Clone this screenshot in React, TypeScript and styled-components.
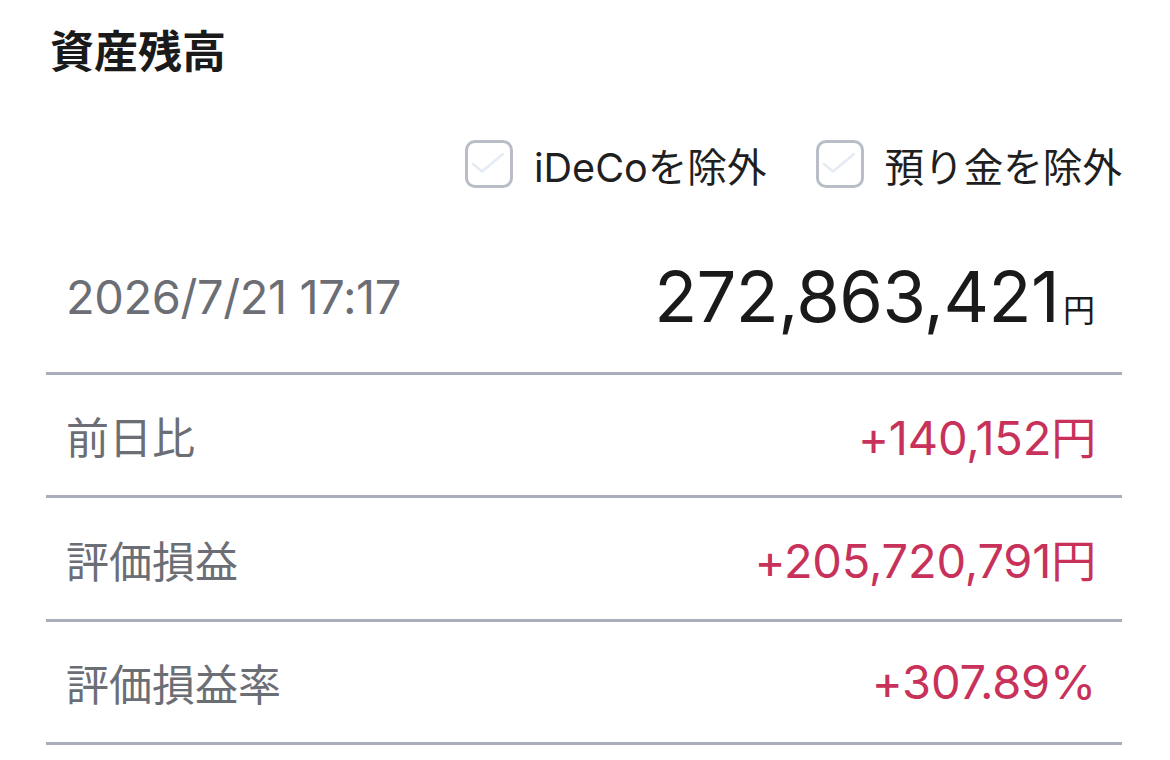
import React from 'react';
import styled, { createGlobalStyle } from 'styled-components';

const GlobalStyle = createGlobalStyle`
  html, body {
    margin: 0;
    padding: 0;
    background: #ffffff;
  }
  body {
    font-family: "Inter", "Noto Sans CJK JP", sans-serif;
    color: #1c1c1e;
  }
`;

const Page = styled.div`
  width: 1170px;
  height: 760px;
  box-sizing: border-box;
  padding: 19px 48px 0 46px;
  display: flex;
  flex-direction: column;
  overflow: hidden;
`;

const Title = styled.h1`
  margin: 0 0 0 4px;
  font-family: "Noto Sans CJK JP", sans-serif;
  font-size: 44px;
  font-weight: 700;
  line-height: 60px;
  color: #1a1a1a;
`;

const FilterBar = styled.div`
  margin-top: 55px;
  height: 60px;
  display: flex;
  justify-content: flex-end;
  align-items: center;
  gap: 49px;
`;

const Filter = styled.label`
  display: flex;
  align-items: center;
  gap: 21px;
  font-family: "Inter", "Noto Sans CJK JP", sans-serif;
  font-size: 39.6px;
  color: #1f1f21;
  cursor: pointer;
`;

const Box = styled.span`
  width: 48px;
  height: 48px;
  box-sizing: border-box;
  border: 3px solid #b9bdc8;
  border-radius: 10px;
  display: flex;
  align-items: center;
  justify-content: center;
  background: #ffffff;
`;

const Summary = styled.div`
  height: 181px;
  box-sizing: border-box;
  padding: 26px 27px 0 20px;
  border-bottom: 3px solid #a9adb9;
  display: flex;
  justify-content: space-between;
  align-items: center;
`;

const Timestamp = styled.span`
  font-size: 47px;
  color: #6c6e76;
  letter-spacing: -0.4px;
`;

const Total = styled.span`
  display: flex;
  align-items: baseline;
  color: #1a1a1a;
`;

const TotalNumber = styled.span`
  font-size: 70.5px;
  letter-spacing: -0.6px;
`;

const Unit = styled.span<{ $size: number; $gap: number }>`
  font-family: "Noto Sans CJK JP", sans-serif;
  font-size: ${({ $size }) => $size}px;
  margin-left: ${({ $gap }) => $gap}px;
`;

const Row = styled.div`
  height: 123.4px;
  box-sizing: border-box;
  padding: 0 26px 0 20px;
  border-bottom: 3px solid #a9adb9;
  display: flex;
  justify-content: space-between;
  align-items: center;
`;

const RowLabel = styled.span`
  font-family: "Noto Sans CJK JP", sans-serif;
  font-size: 43px;
  color: #6c6e76;
`;

const RowValue = styled.span`
  display: flex;
  align-items: baseline;
  font-size: 47px;
  color: #c8325a;
  letter-spacing: -0.2px;
`;

const Check = () => (
  <svg width="42" height="42" viewBox="0 0 42 42" fill="none">
    <path d="M5 21 L14 28.5 L35 11" stroke="#e4ebf3" strokeWidth="2.5" strokeLinecap="round" strokeLinejoin="round" />
  </svg>
);

const rows = [
  { label: '前日比', value: '+140,152', unit: '円' },
  { label: '評価損益', value: '+205,720,791', unit: '円' },
  { label: '評価損益率', value: '+307.89%', unit: '' },
];

export default function App() {
  return (
    <>
      <GlobalStyle />
      <Page>
        <Title>資産残高</Title>
        <FilterBar>
          <Filter>
            <Box><Check /></Box>
            iDeCoを除外
          </Filter>
          <Filter>
            <Box><Check /></Box>
            預り金を除外
          </Filter>
        </FilterBar>
        <Summary>
          <Timestamp>2026/7/21 17:17</Timestamp>
          <Total>
            <TotalNumber>272,863,421</TotalNumber>
            <Unit $size={32} $gap={4}>円</Unit>
          </Total>
        </Summary>
        {rows.map((r) => (
          <Row key={r.label}>
            <RowLabel>{r.label}</RowLabel>
            <RowValue>
              {r.value}
              {r.unit && <Unit $size={45} $gap={0}>{r.unit}</Unit>}
            </RowValue>
          </Row>
        ))}
      </Page>
    </>
  );
}
